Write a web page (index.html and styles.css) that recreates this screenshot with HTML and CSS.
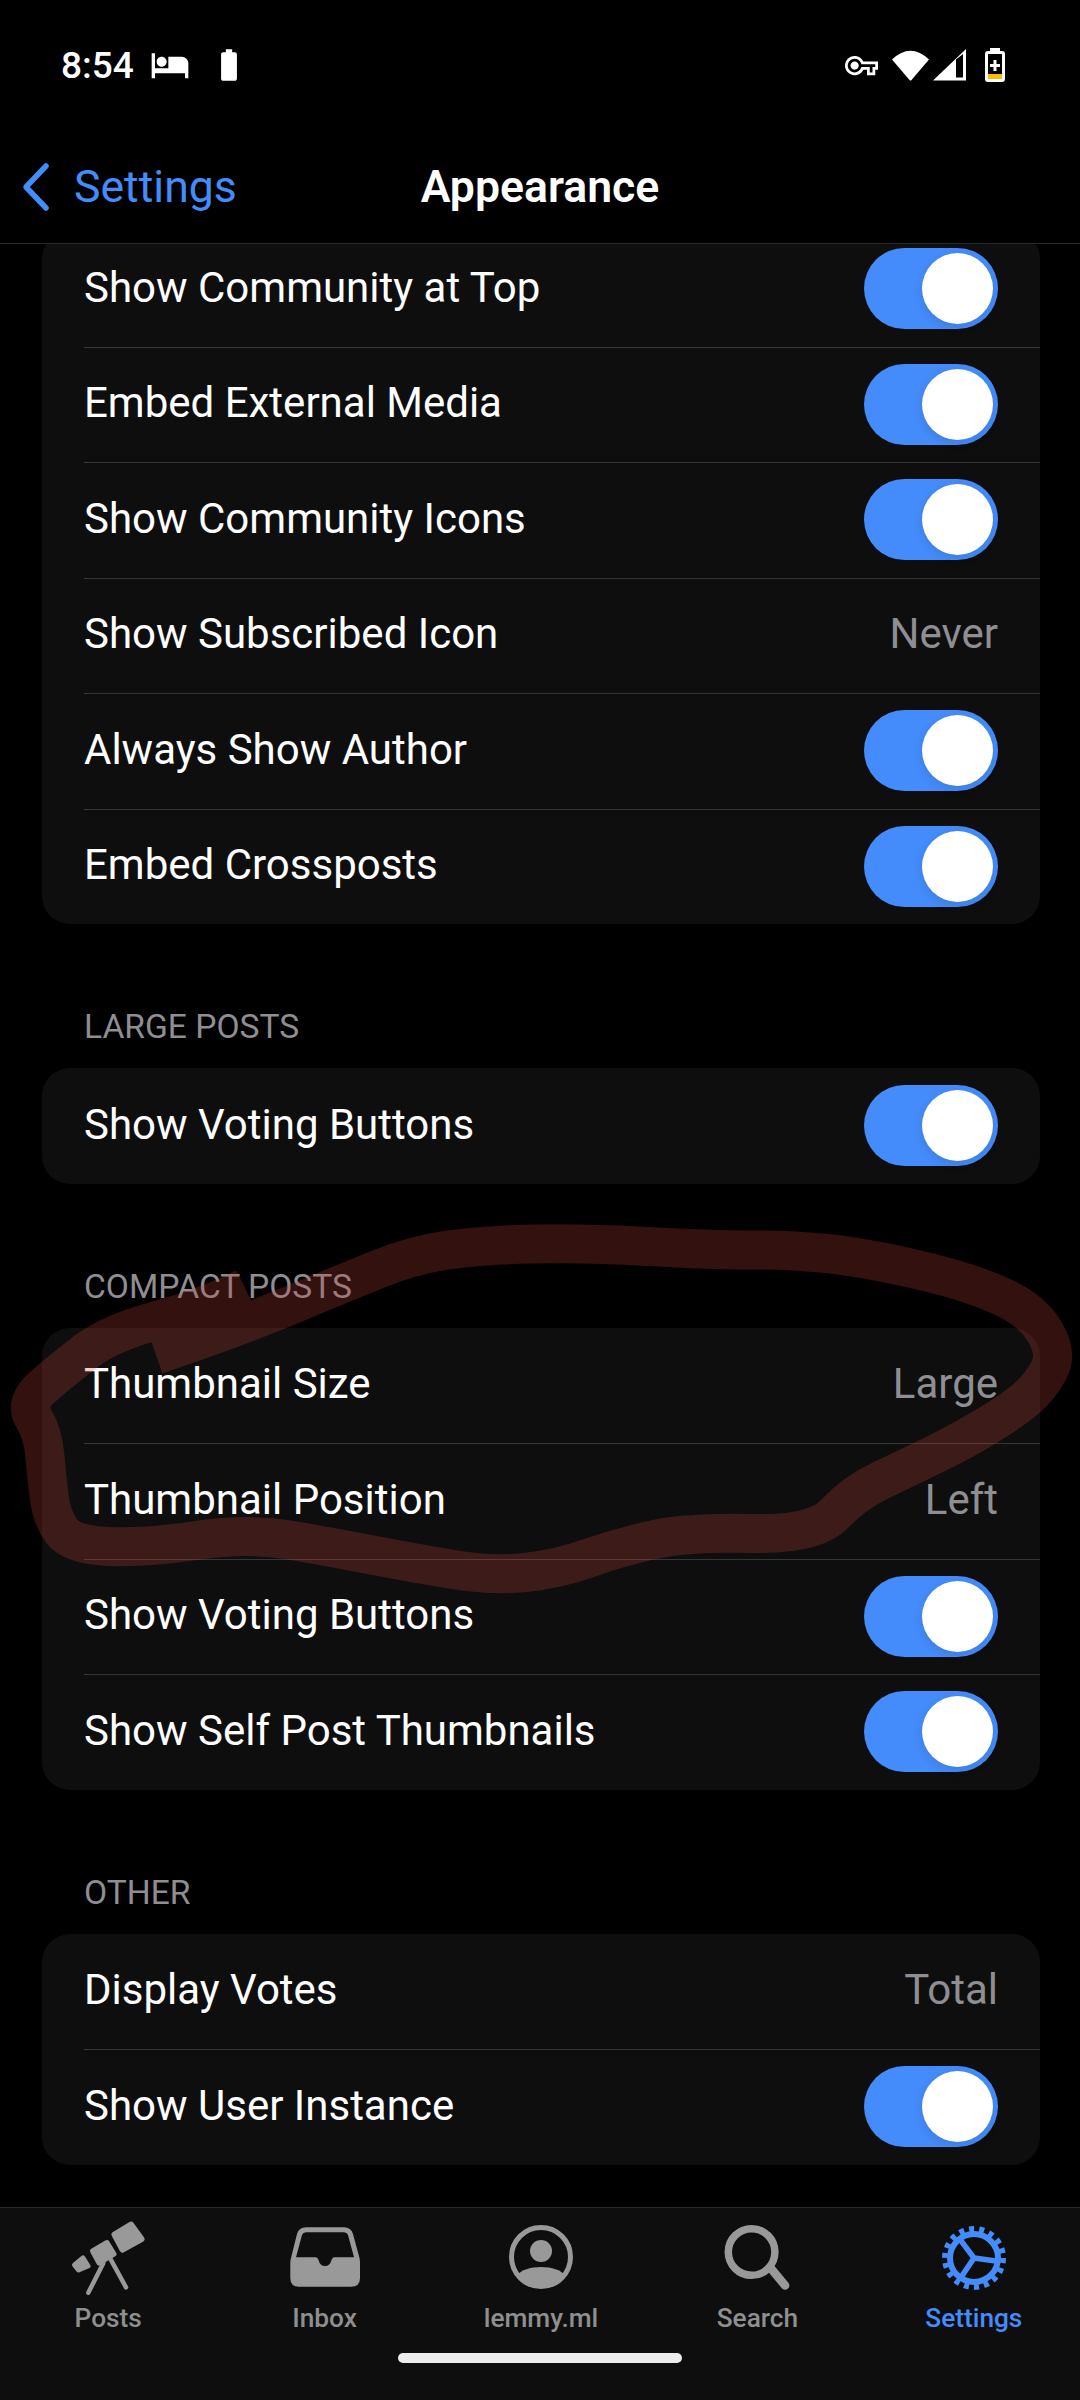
FILE: index.html
```html
<!DOCTYPE html>
<html lang="en">
<head>
<meta charset="utf-8">
<title>Appearance</title>
<link rel="stylesheet" href="styles.css">
</head>
<body>
<div class="app">
  <div class="status">
    <div class="status-left">
      <span class="time">8:54</span>
      <svg class="ic-bed" viewBox="0 0 24 24"><path d="M7 13c1.66 0 3-1.34 3-3S8.66 7 7 7s-3 1.34-3 3 1.34 3 3 3zm12-6h-8v7H3V5H1v15h2v-3h18v3h2v-9c0-2.21-1.79-4-4-4z"/></svg>
      <svg class="ic-batt" viewBox="0 0 24 24"><path d="M15.67 4H14V2h-4v2H8.33C7.6 4 7 4.6 7 5.33v15.33C7 21.4 7.6 22 8.33 22h7.33c.74 0 1.34-.6 1.34-1.33V5.33C17 4.6 16.4 4 15.67 4z"/></svg>
    </div>
    <div class="status-right">
      <svg class="ic-key" viewBox="0 0 24 24"><path d="M22 19h-6v-4h-2.68c-1.14 2.42-3.6 4-6.32 4-3.86 0-7-3.14-7-7s3.14-7 7-7c2.72 0 5.17 1.58 6.32 4H24v6h-2v4zm-4-2h2v-4h2v-2H11.94l-.23-.67C11.01 8.34 9.11 7 7 7c-2.76 0-5 2.24-5 5s2.24 5 5 5c2.11 0 4.01-1.34 4.71-3.33l.23-.67H18v4zM7 15c-1.65 0-3-1.35-3-3s1.35-3 3-3 3 1.35 3 3-1.35 3-3 3z"/></svg>
      <svg class="ic-wifi" viewBox="0 0 39 32"><path d="M1 10.5Q19.500 -7 38 10.500L20.500 31Q19.500 32 18.500 31Z" stroke-linejoin="round"/></svg>
      <svg class="ic-signal" viewBox="0 0 33 32"><path fill-rule="evenodd" d="M0 31.500L33 0V31.500ZM23 10.500V28.500H30V5Z"/></svg>
      <svg class="ic-charge" viewBox="0 0 20 34">
        <path class="batt-shell" fill-rule="evenodd" d="M5 0H15V3H17Q20 3 20 6V31Q20 34 17 34H3Q0 34 0 31V6Q0 3 3 3H5ZM3 6V31H17V6Z"/>
        <rect class="batt-level" x="3" y="26" width="14" height="5"/>
        <path class="batt-shell" d="M8.500 12H11.500V16H15V19H11.500V23H8.500V19H5V16H8.500Z"/>
      </svg>
    </div>
  </div>

  <header class="nav">
    <div class="back">
      <svg class="ic-back" viewBox="0 0 30 50"><path d="M26 4 6 25 26 46"/></svg>
      <span>Settings</span>
    </div>
    <h1 class="nav-title">Appearance</h1>
  </header>

  <main class="scroller">
    <section class="card card-first">
      <div class="row"><span class="label">Show Community at Top</span><span class="toggle"><span class="knob"></span></span></div>
      <div class="row"><span class="label">Embed External Media</span><span class="toggle"><span class="knob"></span></span></div>
      <div class="row"><span class="label">Show Community Icons</span><span class="toggle"><span class="knob"></span></span></div>
      <div class="row"><span class="label">Show Subscribed Icon</span><span class="label value">Never</span></div>
      <div class="row"><span class="label">Always Show Author</span><span class="toggle"><span class="knob"></span></span></div>
      <div class="row"><span class="label">Embed Crossposts</span><span class="toggle"><span class="knob"></span></span></div>
    </section>

    <h2 class="section-label">LARGE POSTS</h2>
    <section class="card">
      <div class="row"><span class="label">Show Voting Buttons</span><span class="toggle"><span class="knob"></span></span></div>
    </section>

    <h2 class="section-label">COMPACT POSTS</h2>
    <section class="card">
      <div class="row"><span class="label">Thumbnail Size</span><span class="label value">Large</span></div>
      <div class="row"><span class="label">Thumbnail Position</span><span class="label value">Left</span></div>
      <div class="row"><span class="label">Show Voting Buttons</span><span class="toggle"><span class="knob"></span></span></div>
      <div class="row"><span class="label">Show Self Post Thumbnails</span><span class="toggle"><span class="knob"></span></span></div>
    </section>

    <h2 class="section-label">OTHER</h2>
    <section class="card">
      <div class="row"><span class="label">Display Votes</span><span class="label value">Total</span></div>
      <div class="row"><span class="label">Show User Instance</span><span class="toggle"><span class="knob"></span></span></div>
    </section>
  </main>

  <footer class="tabbar">
    <nav class="tabs">
      <div class="tab">
        <svg class="tab-icon" viewBox="0 0 80 80">
          <polygon class="solid" points="63,6.500 73.500,21 54.500,31.500 46.500,16.500"/>
          <polygon class="solid thin" points="24.500,33 39,24.500 46,36 31,45"/>
          <polygon class="solid thin" points="6.500,47 15,40 20,48 10.500,52"/>
          <path class="leg" d="M35.300 45.300 20.300 74.700M42.700 41.300 58 69.300"/>
        </svg>
        <span>Posts</span>
      </div>
      <div class="tab">
        <svg class="tab-icon" viewBox="0 0 80 80">
          <path class="fill" fill-rule="evenodd" d="M5.300 60V45Q5.300 43 6 40L12 16Q14 9.300 21 9.300H59Q66 9.300 68 16L74.500 40Q75 43 75 45V60Q75 68.700 66 68.700H14Q5.300 68.700 5.300 60ZM21 14.300Q18 14.300 17 17L11 39.300H31Q32.500 39.300 33.500 42Q35 48 40 48Q45 48 46.500 42Q47.500 39.300 49 39.300H69L63 17Q62 14.300 59 14.300Z"/>
        </svg>
        <span>Inbox</span>
      </div>
      <div class="tab">
        <svg class="tab-icon" viewBox="0 0 80 80">
          <circle class="ring" cx="40" cy="39" r="29.500"/>
          <circle class="fill" cx="40" cy="33" r="11"/>
          <path class="fill" d="M16.500 57C20 52 29 49 40 49C51 49 60 52 63.500 57C58 64 50 68 40 68C30 68 22 64 16.500 57Z"/>
        </svg>
        <span>lemmy.ml</span>
      </div>
      <div class="tab">
        <svg class="tab-icon" viewBox="0 0 80 80">
          <circle class="ring ring-bold" cx="34.600" cy="34" r="23.300"/>
          <path class="leg leg-bold" d="M53.600 50 68.100 67.500"/>
        </svg>
        <span>Search</span>
      </div>
      <div class="tab tab-active">
        <svg class="tab-icon" viewBox="0 0 80 80">
          <circle class="gear-teeth" cx="40" cy="40" r="29"/>
          <circle class="gear-ring" cx="40" cy="40" r="24"/>
          <path class="gear-spoke" d="M40 40 25.600 20.800M40 40 63.800 43.300M40 40 26.600 59.900"/>
        </svg>
        <span>Settings</span>
      </div>
    </nav>
    <div class="home-pill"></div>
  </footer>

  <svg class="scribble" viewBox="0 0 1080 2400">
    <path d="M156 1355L202 1339Q248 1323 296 1303Q344 1283 378.500 1269Q413 1255 447.500 1250Q482 1245 534 1244Q586 1243 648 1246.500Q710 1250 751 1250Q792 1250 826.500 1253.500Q861 1257 912.500 1268.500Q964 1280 997 1294.500Q1030 1308 1044 1330.500Q1058 1353 1049 1370Q1040 1387 1026.500 1398.500Q1013 1410 988.500 1425Q964 1440 936.500 1453.500Q909 1467 881.500 1480Q854 1493 834.500 1514Q815 1535 752 1533.500Q689 1532 654.500 1539.500Q620 1547 589 1558Q558 1569 525.500 1572.500Q493 1576 453 1569.500Q413 1563 372 1555Q331 1547 289.500 1540Q248 1533 196.500 1540.500Q145 1548 108.500 1546.500Q72 1545 62 1531.500Q52 1518 49.500 1499Q47 1480 45 1456.500Q43 1433 33.500 1418Q24 1403 43 1386.500Q62 1370 86 1351.500Q110 1333 158.500 1320Q207 1307 245 1288"/>
  </svg>
</div>
</body>
</html>
```
FILE: styles.css
```css
* { box-sizing: border-box; }
html, body { margin: 0; padding: 0; background: #000; }
body { font-family: Roboto, "Liberation Sans", sans-serif; color: #fff; }

.app {
  position: relative;
  width: 1080px;
  height: 2400px;
  display: flex;
  flex-direction: column;
  overflow: hidden;
  background: #000;
}

/* status bar */
.status {
  height: 130px;
  flex: none;
  display: flex;
  align-items: center;
  justify-content: space-between;
  padding: 0 75px 0 61px;
}
.status svg { fill: #fff; display: block; flex: none; }
.status-left, .status-right { display: flex; align-items: center; }
.time { font-size: 37px; font-weight: 500; }
.ic-bed { width: 40px; height: 40px; margin-left: 16.5px; }
.ic-batt { width: 38px; height: 38px; margin-left: 20px; }
.ic-key { width: 33px; height: 33px; }
.ic-wifi { width: 39px; height: 32px; margin-left: 13px; }
.ic-signal { width: 33px; height: 32px; margin-left: 3px; }
.ic-charge { width: 20px; height: 34px; margin-left: 19px; }
.batt-level { fill: #fbbc05; }

/* nav bar */
.nav {
  height: 114px;
  flex: none;
  position: relative;
  display: flex;
  align-items: center;
  justify-content: center;
  border-bottom: 1px solid #2a2a2a;
}
.back {
  position: absolute;
  left: 20px;
  top: 0;
  bottom: 0;
  display: flex;
  align-items: center;
  color: #448cfb;
  font-size: 44.6px;
}
.ic-back { width: 30px; height: 50px; margin-right: 24px; display: block; }
.ic-back path { fill: none; stroke: #448cfb; stroke-width: 5.5px; stroke-linecap: round; stroke-linejoin: round; }
.nav-title { margin: 0; font-size: 44.6px; font-weight: 600; }

/* content */
.scroller { flex: 1; min-height: 0; overflow: hidden; }
.card {
  margin: 0 40px 0 42px;
  background: #0e0e0e;
  border-radius: 28px;
}
.card-first { margin-top: -13px; }
.row {
  height: 115.5px;
  padding: 0 42px;
  display: flex;
  align-items: center;
  justify-content: space-between;
  font-size: 42px;
  position: relative;
}
.row + .row::before {
  content: "";
  position: absolute;
  left: 42px;
  right: 0;
  top: 0;
  height: 1px;
  background: #363636;
}
.label { margin-bottom: 3px; }
.value { color: #8e8e93; }
.section-label {
  margin: 83px 0 21px 84px;
  height: 40px;
  line-height: 40px;
  font-size: 33.6px;
  font-weight: 400;
  color: #8e8e93;
}

/* toggle */
.toggle {
  width: 134px;
  height: 80.6px;
  border-radius: 41px;
  background: #448cfb;
  position: relative;
  flex: none;
}
.knob {
  position: absolute;
  right: 5px;
  top: 4.8px;
  width: 71px;
  height: 71px;
  border-radius: 50%;
  background: #fff;
  box-shadow: 0 3px 10px rgba(0, 0, 0, .12);
}

/* tab bar */
.tabbar {
  height: 193px;
  flex: none;
  background: #0e0e0e;
  border-top: 1px solid #2a2a2a;
  padding-top: 10px;
  display: flex;
  flex-direction: column;
  align-items: center;
}
.tabs { width: 1082px; align-self: flex-start; display: flex; flex: none; }
.tab {
  flex: 1;
  display: flex;
  flex-direction: column;
  align-items: center;
  font-size: 26.25px;
  font-weight: 500;
  line-height: 32px;
  color: #8f8f8f;
}
.tab-active { color: #448cfb; }
.tab-icon { width: 80px; height: 80px; display: block; margin-bottom: 4px; }
.tab .fill { fill: #999; }
.solid { fill: #999; stroke: #999; stroke-width: 6px; stroke-linejoin: round; }
.solid.thin { stroke-width: 5px; }
.leg { fill: none; stroke: #999; stroke-width: 4.5px; stroke-linecap: round; }
.leg-bold { stroke-width: 8.5px; }
.ring { fill: none; stroke: #999; stroke-width: 5px; }
.ring-bold { stroke-width: 7.5px; }
.gear-teeth { fill: none; stroke: #448cfb; stroke-width: 6px; stroke-dasharray: 5 5.120; }
.gear-ring { fill: none; stroke: #448cfb; stroke-width: 6px; }
.gear-spoke { fill: none; stroke: #448cfb; stroke-width: 5.5px; }
.home-pill {
  width: 284px;
  height: 10px;
  margin-top: 19px;
  border-radius: 5px;
  background: #ececec;
  flex: none;
}

/* hand-drawn annotation laid over the screen */
.scribble {
  position: absolute;
  left: 0;
  top: 0;
  width: 1080px;
  height: 2400px;
  pointer-events: none;
}
.scribble path {
  fill: none;
  stroke: #cc443c;
  stroke-width: 39px;
  stroke-linejoin: round;
  opacity: .25;
}
```
